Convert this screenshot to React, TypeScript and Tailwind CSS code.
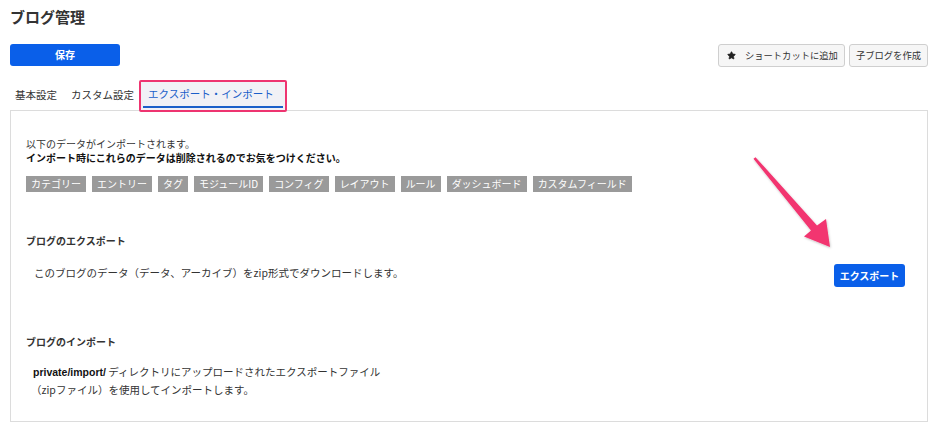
import { Star } from 'lucide-react';

const tags = ['カテゴリー', 'エントリー', 'タグ', 'モジュールID', 'コンフィグ', 'レイアウト', 'ルール', 'ダッシュボード', 'カスタムフィールド'];

const Arrow = () => (
  <svg className="absolute left-0 top-0 pointer-events-none" width="940" height="441" viewBox="0 0 940 441">
    <defs>
      <filter id="sh" x="-20%" y="-20%" width="140%" height="140%">
        <feDropShadow dx="0.5" dy="1" stdDeviation="1" floodColor="#000" floodOpacity="0.25" />
      </filter>
    </defs>
    <polygon
      points="753.5,158.8 755.5,157.2 817,225.5 826,219 830,247 804,236.5 811,230.5"
      fill="#f2346f"
      filter="url(#sh)"
    />
  </svg>
);

export default function App() {
  return (
    <div className="relative w-[940px] h-[441px] overflow-hidden bg-white text-[#333] font-['Noto_Sans_CJK_JP','Noto_Sans',sans-serif]">
      <div className="pl-[10px] pr-[12px]">
        <h1 className="pt-[6px] h-[44px] text-[15px] font-bold leading-[22px] text-[#333]">ブログ管理</h1>

        <div className="flex items-start justify-between h-[36px]">
          <button className="w-[110px] h-[22px] rounded-[3px] bg-[#0a5fe9] text-white text-[10px] font-bold leading-none">保存</button>
          <div className="flex gap-[4px]">
            <button className="flex items-center gap-[9px] h-[23px] pl-[8px] pr-[6px] rounded-[3px] border border-[#cfcfcf] bg-[#f6f6f6] text-[9.3px] text-[#333]">
              <Star className="w-[9px] h-[9px] fill-[#222] text-[#222]" />
              ショートカットに追加
            </button>
            <button className="h-[23px] px-[6px] rounded-[3px] border border-[#cfcfcf] bg-[#f6f6f6] text-[9.3px] text-[#333]">子ブログを作成</button>
          </div>
        </div>

        <div className="flex items-end h-[30px]">
          <div className="px-[5px] h-[30px] flex items-center text-[10.5px] text-[#333]">基本設定</div>
          <div className="ml-[4px] px-[5px] h-[30px] flex items-center text-[10.5px] text-[#333]">カスタム設定</div>
          <div className="relative z-10 -mb-[2px] h-[32px] w-[148px] border-2 border-[#ee3470] rounded-[2px] bg-white">
            <div className="h-full bg-[#f1f1f6] flex flex-col">
              <div className="flex-1 flex items-center pl-[7px] text-[10.5px] text-[#1b5fc9]">エクスポート・インポート</div>
              <div className="mx-[2px] mb-[2px] h-[2px] bg-[#1b5fc9]" />
            </div>
          </div>
        </div>

        <div className="h-[312px] border border-[#dcdcdc] px-[15px]">
          <div className="pt-[26px] text-[10px] leading-[14px]">
            <p>以下のデータがインポートされます。</p>
            <p className="font-bold text-[#111]">インポート時にこれらのデータは削除されるのでお気をつけください。</p>
          </div>

          <div className="mt-[11px] flex gap-[6px]">
            {tags.map((t) => (
              <span key={t} className="h-[16px] px-[5px] flex items-center bg-[#9a9a9a] text-white text-[10px] leading-none">
                {t}
              </span>
            ))}
          </div>

          <h2 className="mt-[41px] text-[10px] font-bold leading-[15px]">ブログのエクスポート</h2>
          <div className="mt-[16px] flex items-start justify-between pl-[8px] pr-[7px]">
            <p className="pt-[1px] text-[10.5px] leading-[15px]">このブログのデータ（データ、アーカイブ）をzip形式でダウンロードします。</p>
            <button className="w-[71px] h-[23px] rounded-[3px] bg-[#0a5fe9] text-white text-[10px] font-bold leading-none">エクスポート</button>
          </div>

          <h2 className="mt-[47px] text-[10px] font-bold leading-[15px]">ブログのインポート</h2>
          <div className="mt-[14px] pl-[7px] text-[10.5px] leading-[17px]">
            <p>
              <span className="font-bold font-['Liberation_Sans','Noto_Sans_CJK_JP',sans-serif] text-[#111]">private/import/</span> ディレクトリにアップロードされたエクスポートファイル
            </p>
            <p className="-ml-[2px]">（zipファイル）を使用してインポートします。</p>
          </div>
        </div>
      </div>
      <Arrow />
    </div>
  );
}
